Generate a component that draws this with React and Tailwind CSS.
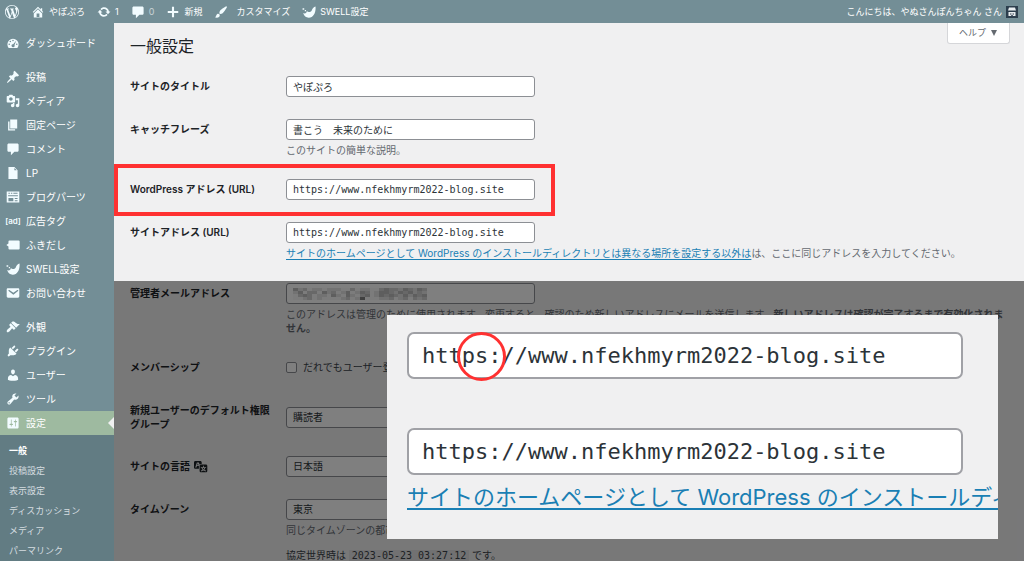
import { useState } from 'react';

const ICONS = {
  wordpress: 'M20 10c0-5.51-4.49-10-10-10C4.48 0 0 4.49 0 10c0 5.52 4.48 10 10 10 5.51 0 10-4.48 10-10zM7.78 15.37L4.37 6.22c.55-.02 1.17-.08 1.17-.08.5-.06.44-1.13-.06-1.11 0 0-1.45.11-2.37.11-.18 0-.37 0-.58-.01C4.12 2.69 6.87 1.11 10 1.11c2.33 0 4.45.87 6.05 2.34-.68-.11-1.65.39-1.65 1.58 0 .74.45 1.36.9 2.1.35.61.55 1.36.55 2.46 0 1.49-1.4 5-1.4 5l-3.03-8.37c.54-.02.82-.17.82-.17.5-.05.44-1.25-.06-1.22 0 0-1.44.12-2.38.12-.87 0-2.33-.12-2.33-.12-.5-.03-.56 1.2-.06 1.22l.92.08 1.26 3.41zM17.41 10c.24-.64.74-1.87.43-4.25.7 1.29 1.05 2.71 1.05 4.25 0 3.29-1.73 6.24-4.4 7.78.97-2.59 1.94-5.2 2.92-7.78zM6.1 18.09C3.12 16.65 1.11 13.53 1.11 10c0-1.3.23-2.48.72-3.59C3.25 10.3 4.67 14.2 6.1 18.09zm4.03-6.63l2.58 6.98c-.86.29-1.76.45-2.71.45-.79 0-1.57-.11-2.29-.33.81-2.38 1.62-4.74 2.42-7.1z',
  home: 'M16 8.5l1.53 1.53-1.06 1.06L10 4.6l-6.47 6.49-1.06-1.06L10 2.5l4 4v-2h2v4zm-6-2.46l6 5.99V18H4v-5.97zM12 17v-5H8v5h4z',
  update: 'M10.2 3.28c3.53 0 6.43 2.61 6.92 6h2.08l-3.5 4-3.5-4h2.32c-.45-1.97-2.21-3.45-4.32-3.45-1.45 0-2.73.71-3.54 1.78L4.95 5.66C6.23 4.2 8.11 3.28 10.2 3.28zm-.4 13.44c-3.52 0-6.43-2.61-6.92-6H.8l3.5-4c1.17 1.33 2.33 2.67 3.5 4H5.48c.45 1.97 2.21 3.45 4.32 3.45 1.45 0 2.73-.71 3.54-1.78l1.71 1.95c-1.28 1.46-3.15 2.38-5.25 2.38z',
  comment: 'M4 2h12c1.1 0 2 .9 2 2v8c0 1.1-.9 2-2 2h-4l-5 5v-5H4c-1.1 0-2-.9-2-2V4c0-1.1.9-2 2-2z',
  plus: 'M17.500 8.500v3h-6v6h-3v-6h-6v-3h6v-6h3v6z',
  brush: 'M18.33 3.57s.27-.8-.31-1.36c-.53-.52-1.22-.24-1.22-.24-.61.3-5.76 3.47-7.67 5.57-.86.96-2.06 3.79-1.09 4.82.92.98 3.96-.17 4.79-1 2.06-2.06 5.21-7.17 5.5-7.79zM1.4 17.65c2.37-1.56 1.46-3.41 3.23-4.64.93-.65 2.22-.62 3.08.29.63.67.8 2.57-.16 3.46-1.57 1.45-4 1.55-6.15.89z',
  swell: 'M19.300 2.200c.9 8.300-2.800 15.800-9.500 16-4.100.1-6.900-2.500-8.100-6.700 2.600 1 4.900.6 5.300-2.900 1.400 2 5.300 1.700 6.900-.9 1.200-2.500 2.500-4.700 5.400-5.500zM.8 4.500h2.400v2.400H.8zM4 7h1.800v1.800H4z',
  dashboard: 'M3.760 17h12.480A8 8 0 1 0 3.760 17zM10 5.200a1.100 1.100 0 1 1 0 2.200 1.100 1.100 0 0 1 0-2.200zM6.200 6.800a1.100 1.100 0 1 1 0 2.200 1.100 1.100 0 0 1 0-2.200zM4.600 10.600a1.100 1.100 0 1 1 0 2.200 1.100 1.100 0 0 1 0-2.200zM15.400 10.600a1.100 1.100 0 1 1 0 2.200 1.100 1.100 0 0 1 0-2.200zM14.700 6.600l-2.600 6.400a2.200 2.200 0 1 1-1.800-1.300z',
  pin: 'M10.44 3.02l1.82-1.82 6.36 6.35-1.83 1.82c-1.05-.68-2.48-.57-3.41.36l-.75.75c-.92.93-1.04 2.35-.35 3.41l-1.83 1.82-2.41-2.41-2.8 2.79c-.42.42-3.38 2.71-3.8 2.29s1.86-3.39 2.28-3.81l2.79-2.79L4.1 9.36l1.83-1.82c1.05.69 2.48.57 3.4-.36l.75-.75c.93-.92 1.05-2.35.36-3.41z',
  media: 'M13 11V4c0-.55-.45-1-1-1h-1.67L9 1H5L3.67 3H2c-.55 0-1 .45-1 1v7c0 .55.45 1 1 1h10c.55 0 1-.45 1-1zM7 4.5c1.38 0 2.5 1.12 2.5 2.5S8.38 9.5 7 9.5 4.5 8.38 4.5 7 5.62 4.5 7 4.5zM14 6h5v10.5c0 1.38-1.12 2.5-2.5 2.5S14 17.88 14 16.5s1.12-2.5 2.5-2.5c.17 0 .34.02.5.05V9h-3V6zm-4 8.05V13h2v3.5c0 1.38-1.12 2.5-2.5 2.5S7 17.88 7 16.5 8.12 14 9.5 14c.17 0 .34.02.5.05z',
  page: 'M6 15V2h10v13H6zm-1 1h8v2H3V5h2v11z',
  file: 'M12 1.500l4.500 4.500v12.500h-13v-17zM12 6h3.300L12 2.700z',
  parts: 'M1 2h18v16H1zM3.500 4v1.500h2V4zM7 4v1.500h2V4zM10.500 4v1.500h6V4zM3 7.500V9h14V7.500zM3.500 11.500V16h7v-4.500zM12.500 11.500V13h4v-1.500zM12.500 14.500V16h4v-1.500z',
  balloon: 'M5 3.500h13a1.500 1.500 0 0 1 1.500 1.500v10a1.500 1.500 0 0 1-1.500 1.500H5A1.500 1.500 0 0 1 3.500 15v-3L.5 10l3-2V5A1.500 1.500 0 0 1 5 3.500z',
  mail: 'M3 3.300h14c1.400 0 2 .6 2 1.900v9.600c0 1.300-.6 1.900-2 1.900H3c-1.400 0-2-.6-2-1.900V5.200c0-1.300.6-1.900 2-1.900zm7.490 9.300l6.74-5.53c.24-.2.43-.66.13-1.07-.29-.41-.82-.42-1.17-.17L10.490 9.690 4.800 5.830c-.35-.25-.88-.24-1.170.17-.3.41-.11.87.13 1.070z',
  appearance: 'M14.48 11.06L7.41 3.99l1.5-1.5c.5-.56 2.3-.47 3.51.32 1.21.8 1.43 1.28 2.91 2.1 1.18.64 2.45 1.26 4.45.85zm-.71.71L6.7 4.7 4.93 6.47c-.39.39-.39 1.02 0 1.41l1.06 1.06c.39.39.39 1.03 0 1.42-.6.6-1.43 1.11-2.21 1.69-.35.26-.7.53-1.01.84C1.43 14.23.4 16.08 1.4 17.07c.99 1 2.84-.03 4.18-1.36.31-.31.58-.66.85-1.02.57-.78 1.08-1.61 1.69-2.21.39-.39 1.02-.39 1.41 0l1.06 1.06c.39.39 1.02.39 1.41 0z',
  plugin: 'M13.11 4.36L9.87 7.6 8 5.73l3.24-3.24c.35-.34 1.05-.2 1.56.32.52.51.66 1.21.31 1.55zm-8 1.77l.91-1.12 9.01 9.01-1.19.84c-.71.71-2.63 1.16-3.82 1.16H6.14L4.9 17.26c-.59.59-1.54.59-2.12 0-.59-.58-.59-1.53 0-2.12l1.24-1.24v-3.88c0-1.13.4-3.19 1.09-3.89zm7.26 3.97l3.24-3.24c.34-.35 1.04-.21 1.55.31.52.51.66 1.21.31 1.55l-3.24 3.25z',
  user: 'M10 9.25c-2.27 0-2.73-3.44-2.73-3.44C7 4.02 7.82 2 9.97 2c2.16 0 2.98 2.02 2.71 3.81 0 0-.41 3.44-2.68 3.44zm0 2.57L12.72 10c2.39 0 4.52 2.33 4.52 4.53v2.49s-3.65 1.13-7.24 1.13c-3.65 0-7.24-1.13-7.24-1.13v-2.49c0-2.25 1.94-4.48 4.47-4.48z',
  tools: 'M16.68 9.77c-1.34 1.34-3.3 1.67-4.95.99l-5.41 6.52c-.99.99-2.59.99-3.58 0s-.99-2.59 0-3.57l6.52-5.42c-.68-1.65-.35-3.61.99-4.95 1.28-1.28 3.12-1.62 4.72-1.06l-2.89 2.89 2.82 2.82 2.86-2.87c.53 1.58.18 3.39-1.08 4.65zM3.81 16.21c.4.39 1.04.39 1.43 0 .4-.4.4-1.04 0-1.43-.39-.4-1.03-.4-1.43 0-.39.39-.39 1.03 0 1.43z',
  settings: 'M18 16V4c0-1.1-.9-2-2-2H4c-1.1 0-2 .9-2 2v12c0 1.1.9 2 2 2h12c1.1 0 2-.9 2-2zM8 11h1c.55 0 1 .45 1 1s-.45 1-1 1H8v1.5c0 .28-.22.5-.5.5s-.5-.22-.5-.5V13H6c-.55 0-1-.45-1-1s.45-1 1-1h1V5.5c0-.28.22-.5.5-.5s.5.22.5.5V11zm5-2h-1c-.55 0-1-.45-1-1s.45-1 1-1h1V5.5c0-.28.22-.5.5-.5s.5.22.5.5V7h1c.55 0 1 .45 1 1s-.45 1-1 1h-1v5.5c0 .28-.22.5-.5.5s-.5-.22-.5-.5V9z',
  translation: 'M11 7H9.49c-.63 0-1.25.3-1.59.7L7 5H4.13l-2.39 7h1.69l.74-2H7v4H2c-1.1 0-2-.9-2-2V5c0-1.1.9-2 2-2h7c1.1 0 2 .9 2 2v2zM6.51 9H4.49l1-2.93zM10 8h7c1.1 0 2 .9 2 2v7c0 1.1-.9 2-2 2h-7c-1.1 0-2-.9-2-2v-7c0-1.1.9-2 2-2zm7.25 5v-1.08h-3.17V9.75h-1.16v2.17H9.75V13h1.28c.11.85.56 1.85 1.28 2.62-.87.36-1.89.62-2.31.62-.01.02.22.97.2 1.46.84 0 2.21-.5 3.28-1.15 1.09.65 2.48 1.15 3.34 1.15-.02-.49.2-1.44.2-1.46-.43 0-1.49-.27-2.38-.63.7-.77 1.14-1.77 1.25-2.61h1.36zm-3.81 1.93c-.5-.46-.85-1.13-1.01-1.93h2.09c-.17.8-.51 1.47-1 1.93l-.04.03s-.03-.02-.04-.03z',
};

const Icon = ({ name, className = 'size-[14px] text-[#f2fcff]' }) => (
  <svg viewBox="0 0 20 20" fill="currentColor" fillRule="evenodd" className={`shrink-0 ${className}`} aria-hidden="true">
    <path d={ICONS[name]} />
  </svg>
);

const menuGroups = [
  [{ icon: 'dashboard', label: 'ダッシュボード' }],
  [
    { icon: 'pin', label: '投稿' },
    { icon: 'media', label: 'メディア' },
    { icon: 'page', label: '固定ページ' },
    { icon: 'comment', label: 'コメント' },
    { icon: 'file', label: 'LP' },
    { icon: 'parts', label: 'ブログパーツ' },
    { icon: 'ad', label: '広告タグ' },
    { icon: 'balloon', label: 'ふきだし' },
    { icon: 'swell', label: 'SWELL設定' },
    { icon: 'mail', label: 'お問い合わせ' },
  ],
  [
    { icon: 'appearance', label: '外観' },
    { icon: 'plugin', label: 'プラグイン' },
    { icon: 'user', label: 'ユーザー' },
    { icon: 'tools', label: 'ツール' },
    { icon: 'settings', label: '設定', active: true },
  ],
];

const submenu = ['一般', '投稿設定', '表示設定', 'ディスカッション', 'メディア', 'パーマリンク'];

// shades of the pixelated e-mail address, one string per row of blocks
const MOSAIC = [
  '3120110111002011002322132132',
  '1302203120130132013321323121',
  '0232011031031023013232131323',
  '0012010000120150001120120212',
];
const MOSAIC_FILLS = ['#f8f8f8', '#e4e4e4', '#d0d0d0', '#bcbcbc', '#a8a8a8', '#808080'];

const inputClass = 'block h-[21px] w-[249px] rounded-[3px] border border-[#8c8f94] bg-white px-[6px] text-[10px] text-[#2c3338]';
const zoomedInputClass = 'h-[47px] w-full rounded-[7px] border-2 border-[#a0a1a6] bg-white px-[13px] text-[22px] text-[#2c3338]';
const monoClass = "font-['DejaVu_Sans_Mono','Noto_Sans_CJK_JP',monospace]";
const descClass = 'mt-[3px] text-[10px] leading-[14px] text-[#646970]';

const AdminBar = () => (
  <header className="flex h-[23px] shrink-0 items-center bg-[#738e96] pr-[6px] pl-[5px] text-[9px] text-white">
    <nav className="flex items-center gap-3">
      <a href="#about" aria-label="WordPress"><Icon name="wordpress" /></a>
      <a href="#site" className="flex items-center gap-1"><Icon name="home" />やぽぷろ</a>
      <a href="#updates" className="flex items-center gap-1"><Icon name="update" />1</a>
      <a href="#comments" className="flex items-center gap-1"><Icon name="comment" /><span className="opacity-60">0</span></a>
      <a href="#new" className="flex items-center gap-1"><Icon name="plus" />新規</a>
      <a href="#customize" className="flex items-center gap-2"><Icon name="brush" />カスタマイズ</a>
      <a href="#swell" className="flex items-center gap-1"><Icon name="swell" />SWELL設定</a>
    </nav>
    <a href="#profile" className="ml-auto flex items-center gap-1">
      こんにちは、やぬさんぽんちゃん さん
      <svg viewBox="0 0 12 12" className="size-3" aria-hidden="true">
        <rect width="12" height="12" fill="#2c3e4d" />
        <path d="M3 1.500h6l1 3H2zM2.500 6h7v4h-7z" fill="#e8edf0" />
        <path d="M4 7.500h1.500v1H4zM6.500 7.500H8v1H6.500zM5 9.300h2v.7H5z" fill="#2c3e4d" />
      </svg>
    </a>
  </header>
);

const Sidebar = () => (
  <aside className="w-[114px] shrink-0 bg-[#738e96] pt-2">
    <nav className="flex flex-col gap-[10px]">
      {menuGroups.map((group, i) => (
        <ul key={i}>
          {group.map((item) => (
            <li key={item.label}>
              <a
                href={`#${item.icon}`}
                className={`relative flex h-6 items-center gap-[6px] pl-[6px] text-[10px] text-white ${item.active ? 'bg-[#9ebaa0]' : ''}`}
              >
                {item.icon === 'ad' ? (
                  <span className="flex w-[14px] shrink-0 justify-center text-[8px] font-semibold text-[#f2fcff]">[ad]</span>
                ) : (
                  <Icon name={item.icon} />
                )}
                {item.label}
                {item.active && (
                  <svg viewBox="0 0 6 12" className="absolute top-[6px] right-0 h-3 w-[6px]" aria-hidden="true">
                    <path d="M6 0v12L0 6z" fill="#f0f0f1" />
                  </svg>
                )}
              </a>
            </li>
          ))}
        </ul>
      ))}
    </nav>
    <ul className="bg-[#627c83] py-[6px] text-[9px] leading-[20px] text-[#d5dde0]">
      {submenu.map((label, i) => (
        <li key={label}>
          <a href={`#sub-${i}`} className={`block pl-[9px] ${i === 0 ? 'font-bold text-white' : ''}`}>{label}</a>
        </li>
      ))}
    </ul>
  </aside>
);

const Row = ({ id, label, children, className = '' }) => (
  <div className={`relative flex ${className}`}>
    <label htmlFor={id} className="w-[156px] shrink-0 py-[3px] pr-[14px] text-[10px] leading-[14px] font-semibold text-[#1d2327]">
      {label}
    </label>
    <div className="min-w-0 flex-1">{children}</div>
  </div>
);

const Callout = ({ url }) => (
  <div className="absolute top-[34px] right-[26px] left-[273px] overflow-hidden bg-[#f0f0f1] pt-[17px] pb-[26px] pl-5">
    <div className="flex flex-col gap-[49px] pr-[35px]">
      <input aria-label="WordPress アドレス 拡大" readOnly value={url} className={`${zoomedInputClass} ${monoClass}`} />
      <input aria-label="サイトアドレス 拡大" readOnly value={url} className={`${zoomedInputClass} ${monoClass}`} />
    </div>
    <a href="#install" className="mt-[6px] block text-[22px] leading-[32px] whitespace-nowrap text-[#1a7fb4] underline decoration-2 underline-offset-3">
      サイトのホームページとして WordPress のインストールディレクトリとは異なる
    </a>
    <span className="absolute top-[17px] left-[70px] size-[49px] rounded-full border-[3px] border-[#ff3131]" />
  </div>
);

const App = () => {
  const [form, setForm] = useState({
    title: 'やぽぷろ',
    tagline: '書こう　未来のために',
    wpUrl: 'https://www.nfekhmyrm2022-blog.site',
    siteUrl: 'https://www.nfekhmyrm2022-blog.site',
    email: '',
    membership: false,
    role: '購読者',
    language: '日本語',
    timezone: '東京',
  });

  const handleChange = (e) => {
    const { id, type, checked, value } = e.target;
    setForm({ ...form, [id]: type === 'checkbox' ? checked : value });
  };

  return (
    <div lang="ja" className="flex h-screen flex-col overflow-hidden bg-[#f0f0f1] font-['Inter','Noto_Sans_CJK_JP',sans-serif]">
      <AdminBar />
      <div className="flex min-h-0 flex-1">
        <Sidebar />
        <main className="flex min-w-0 flex-1 flex-col">
          <div className="flex items-start justify-between pr-[14px] pl-4">
            <h1 className="pt-3 text-[16px] leading-[22px] text-[#1d2327]">一般設定</h1>
            <button type="button" className="flex h-[21px] items-center gap-1 rounded-b-[3px] border border-t-0 border-[#d5d6d9] bg-white px-[11px] text-[9px] text-[#646970]">
              ヘルプ
              <svg viewBox="0 0 8 8" className="size-2" fill="currentColor" aria-hidden="true">
                <path d="M1 1h6L4 7z" />
              </svg>
            </button>
          </div>

          <form className="flex flex-1 flex-col pt-[19px]">
            <div className="flex flex-col gap-[22px] pr-[15px] pb-[21px] pl-4">
              <Row id="title" label="サイトのタイトル">
                <input id="title" type="text" value={form.title} onChange={handleChange} className={inputClass} />
              </Row>
              <Row id="tagline" label="キャッチフレーズ">
                <input id="tagline" type="text" value={form.tagline} onChange={handleChange} className={inputClass} />
                <p className={descClass}>このサイトの簡単な説明。</p>
              </Row>
              <Row id="wpUrl" label="WordPress アドレス (URL)">
                <input id="wpUrl" type="url" value={form.wpUrl} onChange={handleChange} className={`${inputClass} ${monoClass}`} />
                <span className="pointer-events-none absolute -top-[15px] -left-4 h-[52px] w-[441px] border-4 border-[#ff3131]" />
              </Row>
              <Row id="siteUrl" label="サイトアドレス (URL)">
                <input id="siteUrl" type="url" value={form.siteUrl} onChange={handleChange} className={`${inputClass} ${monoClass}`} />
                <p className={descClass}>
                  <a href="#install" className="text-[#1a7fb4] underline underline-offset-2">サイトのホームページとして WordPress のインストールディレクトリとは異なる場所を設定する以外は</a>は、ここに同じアドレスを入力してください。
                </p>
              </Row>
            </div>

            <div className="relative flex-1">
              <div className="flex flex-col gap-[22px] pt-[2px] pr-[15px] pl-4">
                <Row id="email" label="管理者メールアドレス">
                  <div className="relative">
                    <input id="email" type="email" value={form.email} onChange={handleChange} className={inputClass} />
                    <svg viewBox="0 0 28 4" preserveAspectRatio="none" className="pointer-events-none absolute top-[5px] left-[7px] h-3 w-[134px]" shapeRendering="crispEdges" aria-hidden="true">
                      {MOSAIC.map((line, y) =>
                        line.split('').map((shade, x) => (
                          <rect key={`${x}-${y}`} x={x} y={y} width="1" height="1" fill={MOSAIC_FILLS[shade]} />
                        ))
                      )}
                    </svg>
                  </div>
                  <p className={descClass}>
                    このアドレスは管理のために使用されます。変更すると、確認のため新しいアドレスにメールを送信します。<strong className="font-semibold">新しいアドレスは確認が完了するまで有効化されません。</strong>
                  </p>
                </Row>
                <Row id="membership" label="メンバーシップ">
                  <label className="flex h-[21px] items-center gap-[6px] text-[10px] text-[#3c434a]">
                    <input id="membership" type="checkbox" checked={form.membership} onChange={handleChange} className="size-[11px] appearance-none rounded-[2px] border border-[#8c8f94] bg-white" />
                    だれでもユーザー登録ができるようにする
                  </label>
                </Row>
                <Row id="role" label="新規ユーザーのデフォルト権限グループ" className="items-center">
                  <select id="role" value={form.role} onChange={handleChange} className={`${inputClass} appearance-none`}>
                    <option>購読者</option>
                  </select>
                </Row>
                <Row
                  id="language"
                  label={
                    <span className="flex items-center gap-1">
                      サイトの言語
                      <Icon name="translation" className="size-[14px] text-[#1d2327]" />
                    </span>
                  }
                >
                  <select id="language" value={form.language} onChange={handleChange} className={`${inputClass} appearance-none`}>
                    <option>日本語</option>
                  </select>
                </Row>
                <Row id="timezone" label="タイムゾーン">
                  <select id="timezone" value={form.timezone} onChange={handleChange} className={`${inputClass} appearance-none`}>
                    <option>東京</option>
                  </select>
                  <p className={descClass}>同じタイムゾーンの都市または UTC を選択します。</p>
                  <p className="mt-[11px] text-[10px] leading-[14px] text-[#3c434a]">
                    協定世界時は <code className={`bg-[#e3e3e4] px-[3px] ${monoClass}`}>2023-05-23 03:27:12</code> です。
                  </p>
                </Row>
              </div>
              <div className="pointer-events-none absolute inset-0 bg-black/50" />
              <Callout url={form.wpUrl} />
            </div>
          </form>
        </main>
      </div>
    </div>
  );
};

export default App;
